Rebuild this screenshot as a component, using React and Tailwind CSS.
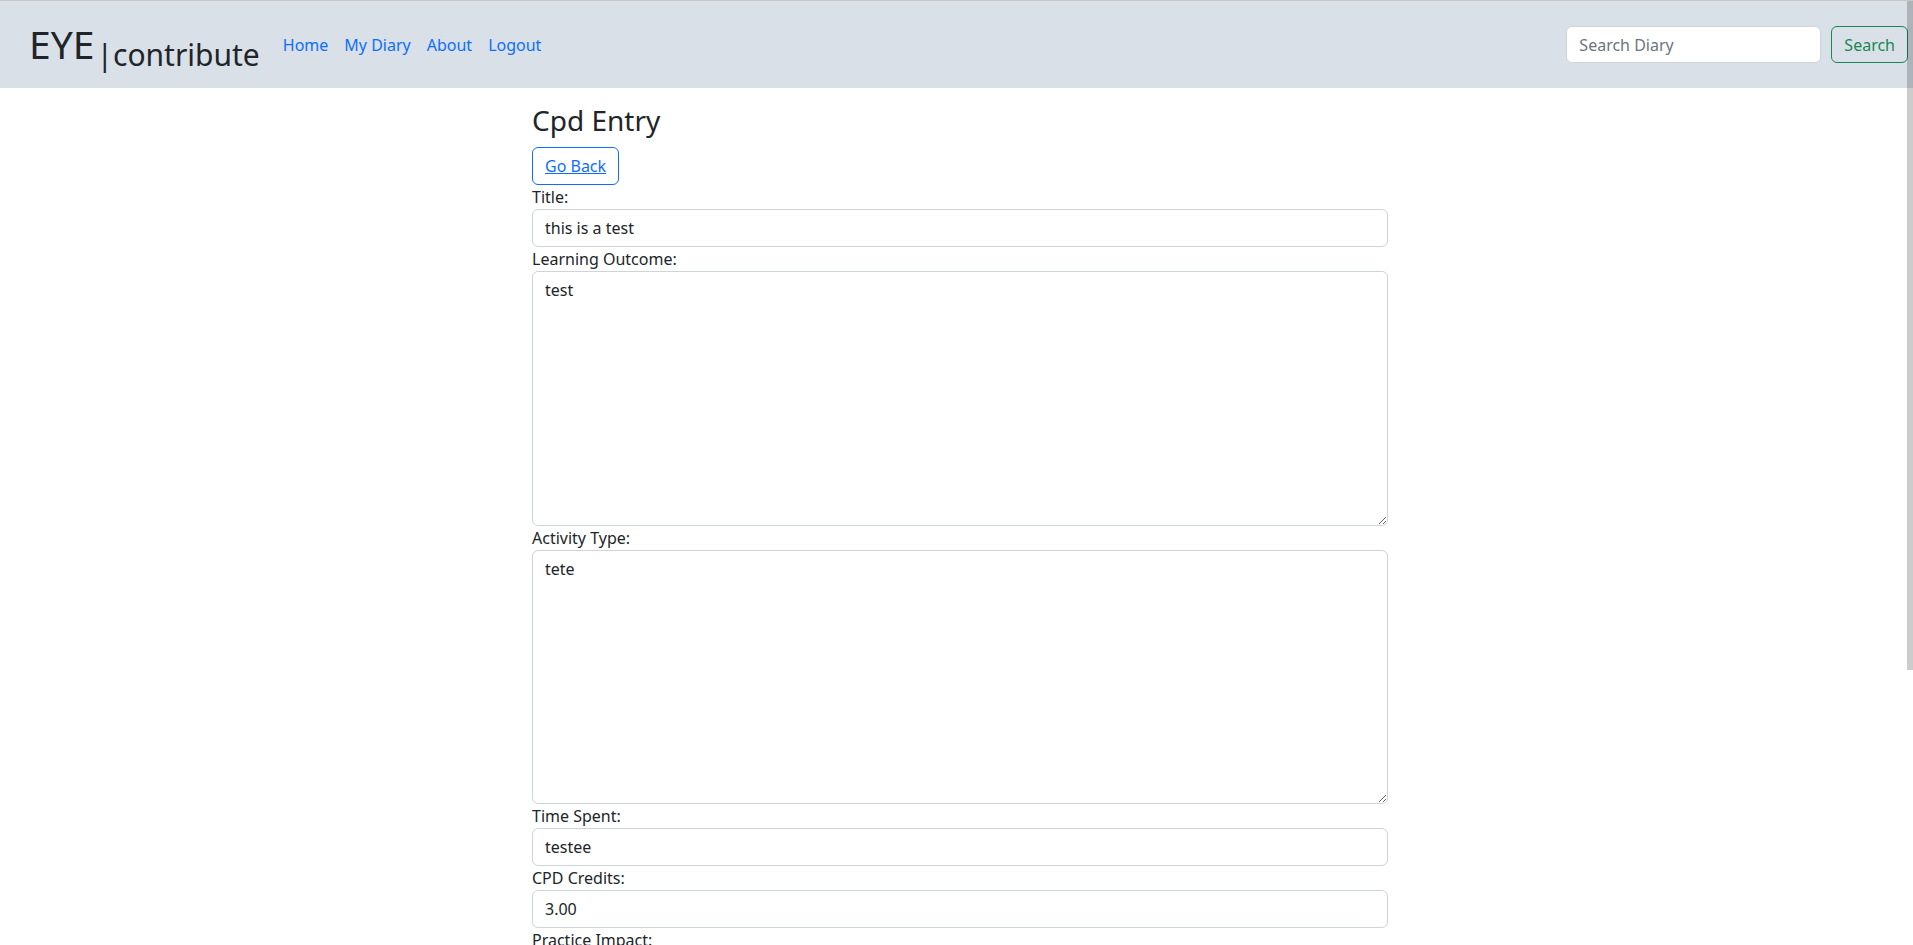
import { useState } from "react";

const fieldClass =
  "block w-full rounded-[6px] border border-[#ced4da] bg-white px-3 py-1.5 text-base leading-6 text-[#212529] outline-none";

function Navbar() {
  const [query, setQuery] = useState("");

  return (
    <nav className="flex h-[88px] items-center justify-between border-t border-[#c6c6c6] bg-[#d9e0e7] pl-[29px] pr-[5px]">
      <div className="flex items-center">
        <a href="#" className="mr-[15px] whitespace-nowrap text-[#212529] no-underline">
          <span className="text-[39px] leading-[60px]">EYE</span>
          <span className="ml-[2px] align-[-7px] text-[30px] leading-[40px]">|contribute</span>
        </a>
        <ul className="flex items-center">
          {["Home", "My Diary", "About", "Logout"].map((item) => (
            <li key={item}>
              <a href="#" className="block px-2 py-2 text-base leading-6 text-[#0d6efd]">
                {item}
              </a>
            </li>
          ))}
        </ul>
      </div>
      <form className="flex items-center" onSubmit={(e) => e.preventDefault()}>
        <input
          type="search"
          value={query}
          onChange={(e) => setQuery(e.target.value)}
          placeholder="Search Diary"
          className="mr-[10px] h-[37px] w-[255px] rounded-[6px] border border-[#ced4da] bg-white px-3 text-base text-[#212529] outline-none placeholder:text-[#6c757d]"
        />
        <button
          type="submit"
          className="h-[37px] rounded-[6px] border border-[#198754] px-3 text-base text-[#198754]">
          Search
        </button>
      </form>
    </nav>
  );
}

function Field({ label, value, area, tall }) {
  return (
    <div>
      <label className="block text-base leading-6 text-[#212529]">{label}</label>
      {area ? (
        <textarea
          defaultValue={value}
          rows={10}
          className={fieldClass + (tall ? " h-[255px]" : " h-[254px]") + " resize-y"}
        />
      ) : (
        <input type="text" defaultValue={value} className={fieldClass + " h-[38px]"} />
      )}
    </div>
  );
}

export default function App() {
  return (
    <div className="relative h-[945px] overflow-hidden bg-white font-['Noto_Sans',sans-serif] text-[#212529]">
      <Navbar />
      <main className="ml-[532px] w-[856px] pt-4">
        <h3 className="mb-[9px] text-[28px] font-normal leading-[1.2]">Cpd Entry</h3>
        <button className="h-[38px] rounded-[6px] border border-[#0d6efd] px-3 text-base">
          <a href="#" className="text-[#0d6efd] underline">
            Go Back
          </a>
        </button>
        <form onSubmit={(e) => e.preventDefault()}>
          <Field label="Title:" value="this is a test" />
          <Field label="Learning Outcome:" value="test" area tall />
          <Field label="Activity Type:" value="tete" area />
          <Field label="Time Spent:" value="testee" />
          <Field label="CPD Credits:" value="3.00" />
          <Field label="Practice Impact:" value="" area />
        </form>
      </main>
      {/* overlay scrollbar thumb */}
      <div className="absolute right-0 top-[1px] h-[669px] w-[6px] bg-black/20" />
    </div>
  );
}
